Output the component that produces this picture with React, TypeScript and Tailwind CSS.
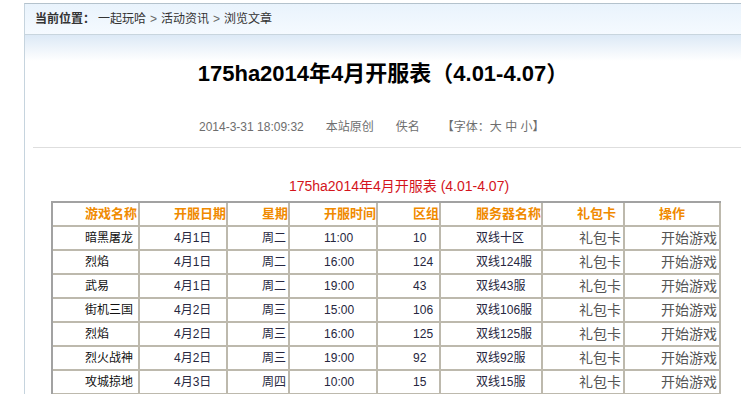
const font = { fontFamily: '"Liberation Sans", "Noto Sans CJK SC", sans-serif' };

const cols = [
  { label: '游戏名称', w: 'w-[87px]', pl: 'pl-[32px]' },
  { label: '开服日期', w: 'w-[88px]', pl: 'pl-[34px]' },
  { label: '星期', w: 'w-[62px]', pl: 'pl-[34px]' },
  { label: '开服时间', w: 'w-[88px]', pl: 'pl-[34px]' },
  { label: '区组', w: 'w-[61px]', pl: 'pl-[35px]' },
  { label: '服务器名称', w: 'w-[102px]', pl: 'pl-[35px]' },
  { label: '礼包卡', w: 'w-[82px]', pl: 'pl-[34px]' },
  { label: '操作', w: 'w-[96px]', pl: 'pl-[34px]' },
];

const rows = [
  ['暗黑屠龙', '4月1日', '周二', '11:00', '10', '双线十区'],
  ['烈焰', '4月1日', '周二', '16:00', '124', '双线124服'],
  ['武易', '4月1日', '周二', '19:00', '43', '双线43服'],
  ['街机三国', '4月2日', '周三', '15:00', '106', '双线106服'],
  ['烈焰', '4月2日', '周三', '16:00', '125', '双线125服'],
  ['烈火战神', '4月2日', '周三', '19:00', '92', '双线92服'],
  ['攻城掠地', '4月3日', '周四', '10:00', '15', '双线15服'],
];

const cell = 'h-[24px] border-r-2 border-b-2 border-[#bdb9ad] whitespace-nowrap p-0';

export default function App() {
  return (
    <div className="h-[394px] w-full overflow-hidden bg-white" style={font}>
      <div className="ml-[24px] mt-[3px] min-h-[391px] border-l border-t border-l-[#c6d4de] border-t-[#b4c2cc]">
        {/* breadcrumb bar */}
        <div className="flex h-[31px] items-center border-b border-[#c8d5de] bg-gradient-to-b from-[#e9f3fc] to-[#f5faff] pl-[10px] text-[12px] text-[#333]">
          <span className="font-bold">当前位置：</span>
          <span className="ml-[3px]">一起玩哈</span>
          <span className="mx-[4px] text-[#666]">&gt;</span>
          <span>活动资讯</span>
          <span className="mx-[4px] text-[#666]">&gt;</span>
          <span>浏览文章</span>
        </div>

        <div className="bg-[linear-gradient(to_bottom,#dce9f6,#ffffff_26px)] pt-[24px]">
          <h1 className="text-center text-[22px] font-bold leading-[30px] text-black">
            175ha2014年4月开服表（4.01-4.07）
          </h1>

          <div className="mt-[28px] flex h-[20px] items-center gap-[22px] pl-[174px] text-[12px] text-[#6e6e6e]">
            <span>2014-3-31 18:09:32</span>
            <span>本站原创</span>
            <span>佚名</span>
            <span>【字体：大 中 小】</span>
          </div>

          <div className="ml-[8px] mt-[10px] h-px bg-[#dedede]" />

          <div className="mt-[28px] h-[20px] pl-[32px] text-center text-[14px] leading-[20px] text-[#d4141c]">
            175ha2014年4月开服表 (4.01-4.07)
          </div>

          <table className="ml-[26px] mt-[5px] table-fixed border-separate border-spacing-0 border-l-2 border-t-2 border-[#a2a2a2] text-[12px]">
            <thead>
              <tr>
                {cols.map((c) => (
                  <th key={c.label} className={`${cell} ${c.w} ${c.pl} text-left text-[13px] font-bold text-[#f08a00]`}>
                    {c.label}
                  </th>
                ))}
              </tr>
            </thead>
            <tbody>
              {rows.map((r, i) => (
                <tr key={i}>
                  {r.map((v, j) => (
                    <td key={j} className={`${cell} ${cols[j].pl} text-left ${j === 0 ? 'text-[#111]' : 'text-[#262640]'}`}>
                      {v}
                    </td>
                  ))}
                  <td className={`${cell} pr-[2px] text-right text-[14px] text-[#555]`}>礼包卡</td>
                  <td className={`${cell} pr-[2px] text-right text-[14px] text-[#555]`}>开始游戏</td>
                </tr>
              ))}
            </tbody>
          </table>
        </div>
      </div>
    </div>
  );
}
